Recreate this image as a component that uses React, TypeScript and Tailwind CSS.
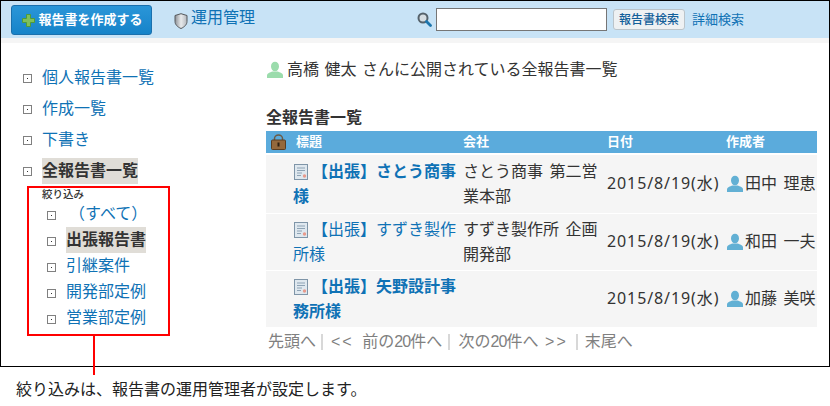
const jp = 'font-["Liberation_Sans","Noto_Sans_CJK_JP",sans-serif]';

const menu = [
  { label: '個人報告書一覧' },
  { label: '作成一覧' },
  { label: '下書き' },
  { label: '全報告書一覧', active: true },
];

const filters = [
  { label: '（すべて）', indent: true },
  { label: '出張報告書', active: true },
  { label: '引継案件' },
  { label: '開発部定例' },
  { label: '営業部定例' },
];

const rows = [
  { title: '【出張】さとう商事様', bold: true, company: 'さとう商事 第二営業本部', name: '田中 理恵', first: true },
  { title: '【出張】すずき製作所様', bold: false, company: 'すずき製作所 企画開発部', name: '和田 一夫' },
  { title: '【出張】矢野設計事務所様', bold: true, company: '', name: '加藤 美咲' },
];

function Bullet() {
  return (
    <span className="flex h-[9px] w-[9px] shrink-0 items-center justify-center border border-[#808080] bg-white">
      <span className="h-px w-px bg-[#333]" />
    </span>
  );
}

function Separator({ className }: { className: string }) {
  return <span className={`mt-[4px] h-[16px] w-[2px] bg-[#d8d8d8] ${className}`} />;
}

function Person({ color }: { color: string }) {
  return (
    <svg width="18" height="18" viewBox="0 0 18 18" className="shrink-0">
      <ellipse cx="9" cy="5.5" rx="4" ry="4.8" fill={color} />
      <path d="M1 17v-2.5c0-2.2 3-3.2 5.5-4h5c2.500.8 5.500 1.800 5.500 4V17z" fill={color} />
    </svg>
  );
}

function DocIcon() {
  return (
    <svg width="14" height="16" viewBox="0 0 14 16" className="ml-px mr-[4px] inline-block align-[-3px]">
      <rect x="0.5" y="0.5" width="13" height="15" fill="#dfe8ef" stroke="#7f95a8" />
      <path d="M3 4h8M3 6.500h8M3 9h5M3 11.500h4" stroke="#8ea3b5" />
      <circle cx="10.500" cy="12" r="1.700" fill="#e89a8c" />
    </svg>
  );
}

function Lock() {
  return (
    <svg width="15" height="16" viewBox="0 0 15 16">
      <path d="M3.500 7V4.500a4 3.500 0 0 1 8 0V7" fill="none" stroke="#6b5a45" strokeWidth="1.500" />
      <rect x="0.500" y="6" width="14" height="9.500" rx="1" fill="#94693c" stroke="#5a3e22" />
      <rect x="6.500" y="8.500" width="2" height="4" fill="#2f2010" />
    </svg>
  );
}

export default function App() {
  return (
    <div className={`relative h-[406px] w-[830px] overflow-hidden bg-white text-[#333] [word-spacing:2px] ${jp}`}>
      <div className="h-[367px] border border-black">
        <header className="flex h-[37px] items-center bg-[#c8e3f6] pl-[10px]">
          <button className="flex h-[30px] w-[141px] items-center justify-center gap-[3px] rounded-[3px] border border-[#1a70ad] bg-gradient-to-b from-[#2a96d8] to-[#1583c9] pl-[2px] text-[13px] font-bold text-white">
            <svg width="13" height="13" viewBox="0 0 13 13" className="mt-[2px]">
              <path d="M4.500.5h4v4h4v4h-4v4h-4v-4h-4v-4h4z" fill="#7ec05a" stroke="#4f9a3a" />
            </svg>
            報告書を作成する
          </button>
          <a className="ml-[22px] flex items-center gap-[3px] text-[16px] text-[#0f72b5]">
            <svg width="14" height="16" viewBox="0 0 14 16" className="mt-[3px]">
              <defs>
                <linearGradient id="shield" x1="0" x2="1" y1="0" y2="0">
                  <stop offset="0" stopColor="#8c9096" />
                  <stop offset="0.5" stopColor="#e8eaec" />
                  <stop offset="1" stopColor="#b4b8bd" />
                </linearGradient>
              </defs>
              <path d="M7 .7 13 2.500v6c0 3-2.500 5.500-6 7-3.500-1.500-6-4-6-7v-6z" fill="url(#shield)" stroke="#55585c" />
            </svg>
            <span className="mb-[3px]">運用管理</span>
          </a>
          <svg width="15" height="15" viewBox="0 0 15 15" className="ml-[162px] mr-[4px]">
            <circle cx="6" cy="6" r="4.500" fill="#d5dde2" stroke="#55626b" strokeWidth="2" />
            <path d="M9.500 9.500 13.500 13.500" stroke="#1d76ad" strokeWidth="2.800" strokeLinecap="round" />
          </svg>
          <div className="h-[23px] w-[171px] border border-[#767676] bg-white" />
          <button className="ml-[6px] h-[21px] w-[72px] rounded-[3px] border border-[#bbc4ca] bg-[#eef1f3] text-[12px] font-medium text-[#14609a]">
            報告書検索
          </button>
          <a className="ml-[7px] text-[13px] text-[#0f72b5]">詳細検索</a>
        </header>
        <div className="h-[5px] bg-[#f5f5f5]" />

        <div className="flex">
          <nav className="w-[265px] shrink-0 pt-[19px]">
            <ul className="pl-[22px]">
              {menu.map(item => (
                <li key={item.label} className="flex h-[31px] items-center gap-[10px] text-[16px]">
                  <span className="mt-[2px]"><Bullet /></span>
                  <span className={item.active ? 'bg-[#e0ddd7] py-[1px] font-bold text-[#333]' : 'text-[#0f72b5]'}>{item.label}</span>
                </li>
              ))}
            </ul>
            <div className="ml-[26px] h-[150px] w-[143px] border-2 border-[#f00]">
              <div className="pl-[13px] text-[10.500px] font-medium leading-[13px]">絞り込み</div>
              <ul className="pl-[18px]">
                {filters.map(item => (
                  <li key={item.label} className="flex h-[26px] items-center gap-[10px] text-[16px]">
                    <span className="mt-[2px]"><Bullet /></span>
                    <span className={item.active ? 'bg-[#e0ddd7] py-[1px] font-bold text-[#333]' : item.indent ? 'pl-[3px] text-[#0f72b5]' : 'text-[#0f72b5]'}>{item.label}</span>
                  </li>
                ))}
              </ul>
            </div>
          </nav>

          <main className="w-[551px] shrink-0">
            <div className="mt-[15px] flex items-center gap-[3px] text-[16px] leading-[24px] [word-spacing:1px]">
              <Person color="#9bdcac" />
              高橋 健太 さんに公開されている全報告書一覧
            </div>
            <h2 className="mb-[1px] mt-[24px] text-[16px] font-bold leading-[24px]">全報告書一覧</h2>
            <table className="w-[551px] table-fixed border-collapse">
              <thead>
                <tr className="h-[23px] bg-[#5babdc] text-left text-[13px] font-bold text-white">
                  <th className="w-[197px] p-0 font-bold">
                    <div className="flex items-center pl-[5px]"><Lock /><span className="ml-[10px]">標題</span></div>
                  </th>
                  <th className="w-[144px] p-0 font-bold">会社</th>
                  <th className="w-[119px] p-0 font-bold">日付</th>
                  <th className="p-0 font-bold">作成者</th>
                </tr>
              </thead>
              <tbody className="text-[16px] leading-[25px]">
                {rows.map(row => (
                  <tr key={row.name} className={`${row.first ? 'h-[59px] border-t-2' : 'h-[57px] border-t'} border-white bg-[#f5f5f5]`}>
                    <td className="py-0 pl-[27px] pr-0 align-middle">
                      <a className={`text-[#0f72b5] ${row.bold ? 'font-bold' : ''}`}>
                        <DocIcon />
                        {row.title}
                      </a>
                    </td>
                    <td className="p-0 align-middle">{row.company}</td>
                    <td className="p-0 align-middle font-['Noto_Sans','Noto_Sans_CJK_JP',sans-serif] tracking-[0.9px]">2015/8/19(水)</td>
                    <td className="p-0 align-middle">
                      <span className="flex items-center gap-[1px]"><Person color="#62b0d4" />{row.name}</span>
                    </td>
                  </tr>
                ))}
              </tbody>
            </table>
            <div className="mt-[3px] flex text-[16px] leading-[24px] text-[#808080]">
              <span className="ml-[2px]">先頭へ</span>
              <Separator className="ml-[5px] mr-[8px]" />
              <span><span className="tracking-[2px]">&lt;&lt;</span><span className="ml-[2px]"> 前の</span><span className="tracking-[-0.8px]">20</span>件へ</span>
              <Separator className="ml-[6px] mr-[8px]" />
              <span>次の<span className="tracking-[-0.8px]">20</span>件へ <span className="tracking-[2px]">&gt;&gt;</span></span>
              <Separator className="ml-[8px] mr-[7px]" />
              <span>末尾へ</span>
            </div>
          </main>
        </div>
      </div>

      <div className="absolute left-[93px] top-[336px] h-[39px] w-[2px] bg-[#f00]" />
      <p className="ml-[16px] mt-[11px] text-[16px] leading-[24px] text-[#222]">絞り込みは、報告書の運用管理者が設定します。</p>
    </div>
  );
}
